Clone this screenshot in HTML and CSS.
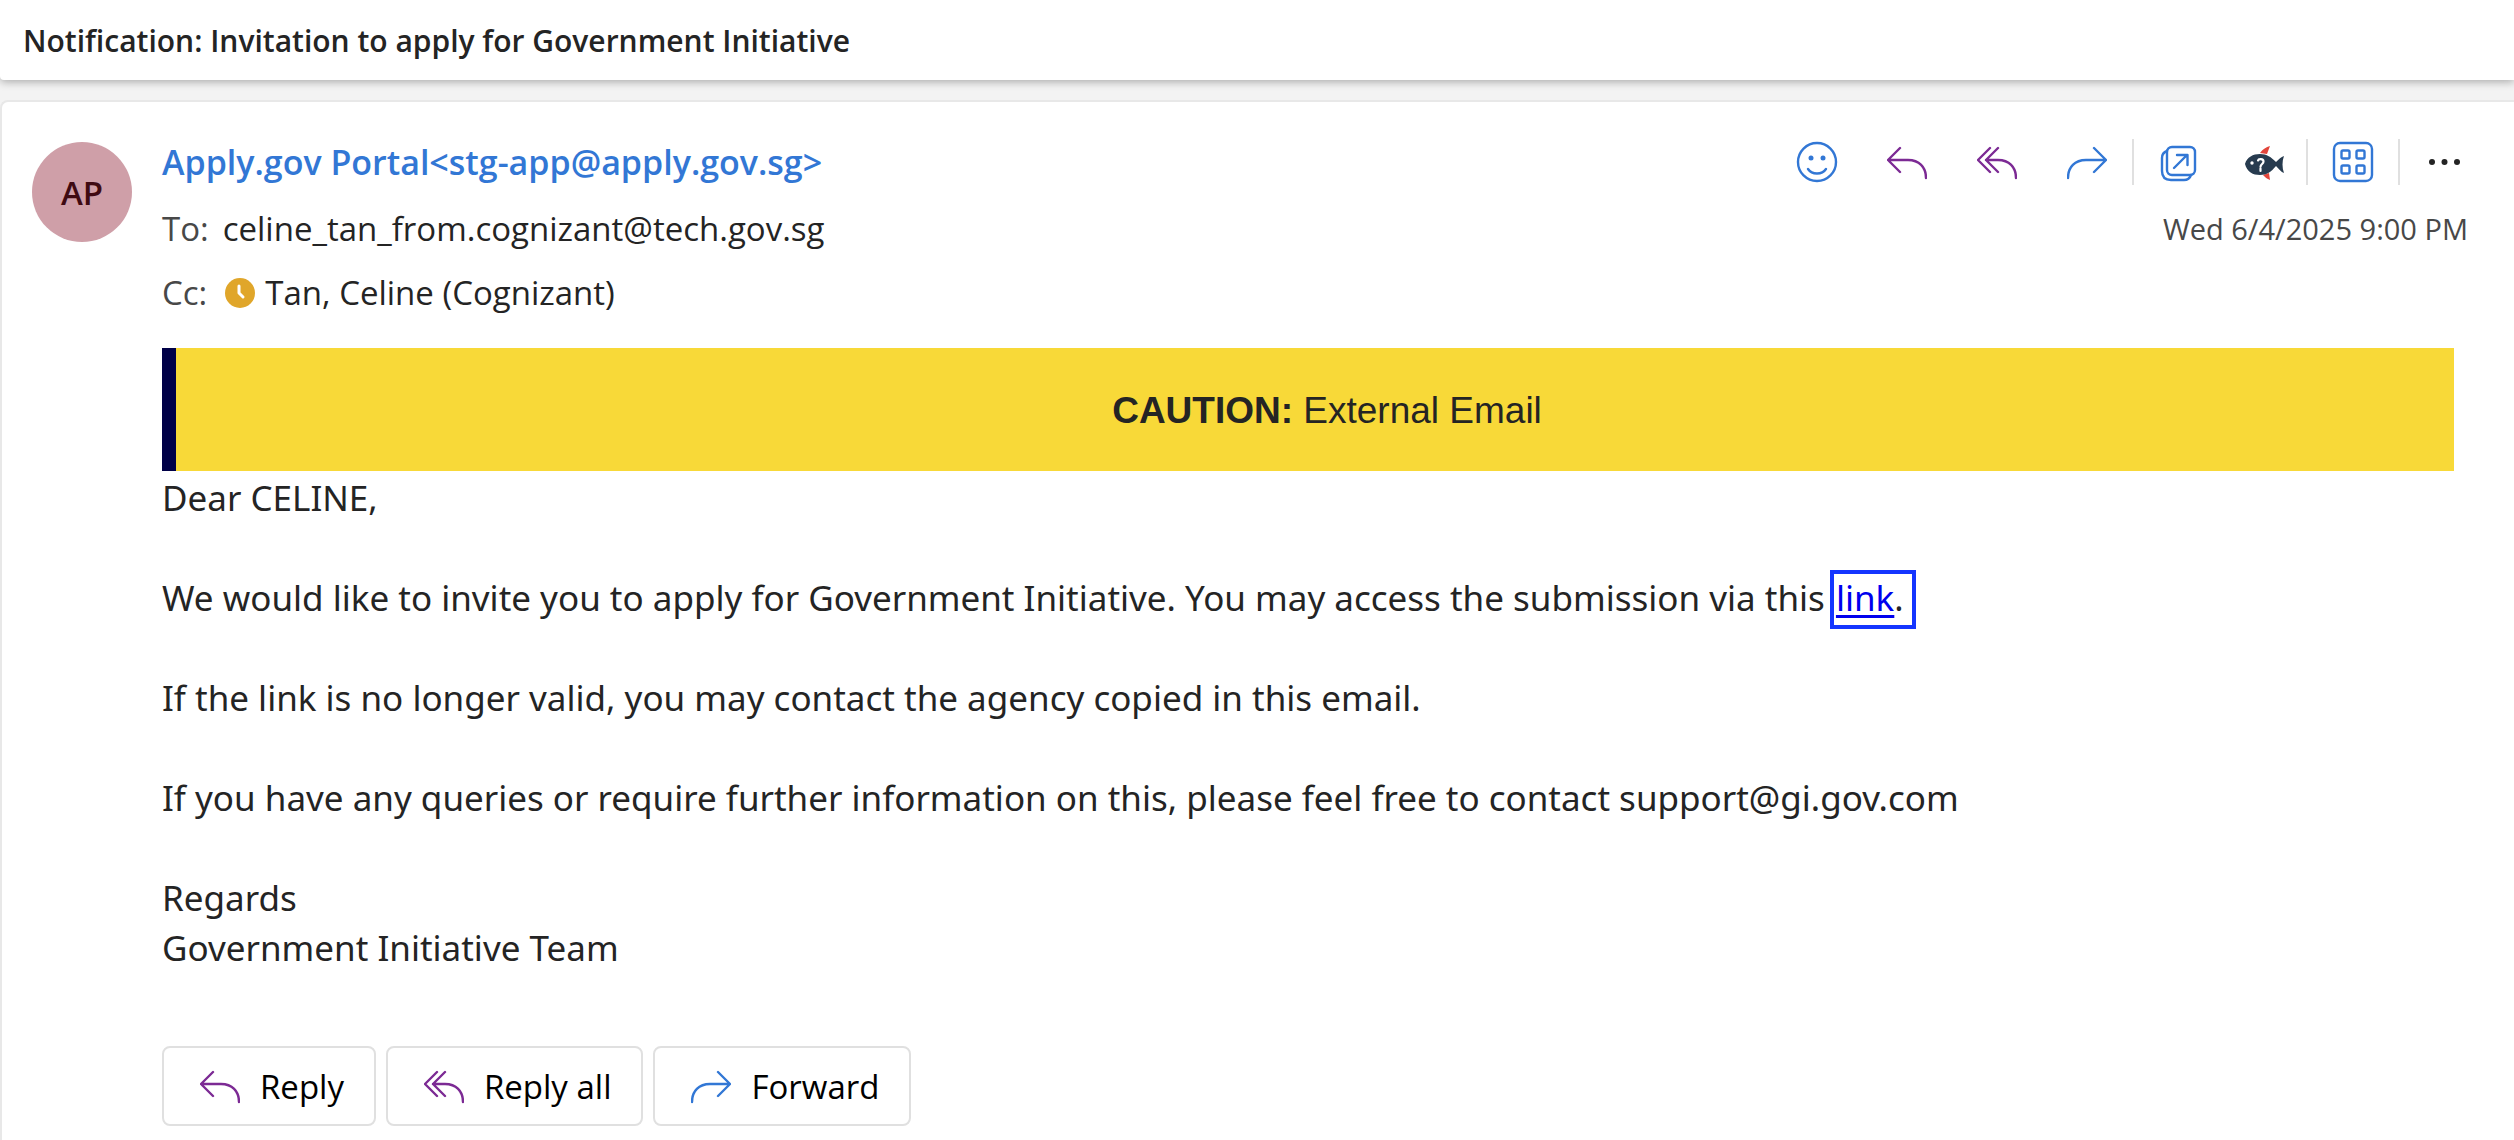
FILE: index.html
```html
<!DOCTYPE html>
<html lang="en">
<head>
<meta charset="utf-8">
<title>Notification: Invitation to apply for Government Initiative</title>
<link rel="stylesheet" href="styles.css">
</head>
<body>
<svg class="sprite" aria-hidden="true">
  <symbol id="reply" viewBox="0 0 40 40"><path d="M13 6 1 18 13 30M1 18H21C32 18 39 25 39 36"/></symbol>
  <symbol id="reply-all" viewBox="0 0 40 40"><path d="M13 6 1 18 13 30M21 6 9 18 21 30M9 18H21C32 18 39 25 39 36"/></symbol>
  <symbol id="forward" viewBox="0 0 40 40"><path d="M27 6 39 18 27 30M39 18H19C8 18 1 25 1 36"/></symbol>
</svg>

<header class="subject">
  <h1 class="subject-text">Notification: Invitation to apply for Government Initiative</h1>
</header>

<main class="message">
  <div class="avatar">AP</div>
  <div class="content">
    <div class="head">
      <div class="people">
        <div class="sender">Apply.gov Portal&lt;stg-app@apply.gov.sg&gt;</div>
        <div class="recipient"><span class="label">To:</span><span>celine_tan_from.cognizant@tech.gov.sg</span></div>
        <div class="recipient cc"><span class="label">Cc:</span>
          <svg class="presence" viewBox="0 0 30 30" aria-hidden="true"><circle cx="15" cy="15" r="15" fill="#e0a62a"/><path d="M14 8V15L18 19" fill="none" stroke="#fff" stroke-width="3" stroke-linecap="round" stroke-linejoin="round"/></svg>
          <span>Tan, Celine (Cognizant)</span></div>
      </div>
      <div class="meta">
        <div class="toolbar">
          <button class="tool blue" aria-label="React"><svg class="icon" viewBox="0 0 40 40"><circle cx="20" cy="20" r="19"/><path d="M11 27C15 33 25 33 29 27"/><circle class="solid" cx="14" cy="16" r="2.5"/><circle class="solid" cx="26" cy="16" r="2.5"/></svg></button>
          <button class="tool purple" aria-label="Reply"><svg class="icon"><use href="#reply"/></svg></button>
          <button class="tool purple" aria-label="Reply all"><svg class="icon"><use href="#reply-all"/></svg></button>
          <button class="tool blue" aria-label="Forward"><svg class="icon"><use href="#forward"/></svg></button>
          <span class="divider"></span>
          <button class="tool blue" aria-label="Open in new window"><svg class="icon" viewBox="0 0 40 40"><rect x="8" y="5" width="28" height="28" rx="5"/><path d="M8 9C5 10 3 12 3 16V29C3 35 6 38 12 38H25C29 38 31 36 32 33M15 26 28 13M18 13H28.500V23"/></svg></button>
          <button class="tool fish" aria-label="Report phishing"><svg class="icon" viewBox="0 0 40 40"><path fill="#e2453b" d="M15 11C18 7 21 5 25 4L22 12ZM18 33 24 31 25 38C22 37 20 35 18 33Z"/><path fill="#273b4f" d="M0 22C2 15 8 12 15 12C22 12 26 15 31 20C34 17 36 15 39 14C37 19 37 26 39 31C36 30 34 27 31 24C26 30 22 33 15 33C8 33 2 30 0 22Z"/><circle cx="7" cy="21" r="1.700" fill="#fff"/><path fill="none" stroke="#fff" stroke-width="2.200" d="M13 18.500C13.500 16.500 18.500 16.500 18.500 19.500C18.500 22 15.500 22 15.500 25M15.500 26.500V29"/></svg></button>
          <span class="divider"></span>
          <button class="tool blue" aria-label="Apps"><svg class="icon" viewBox="0 0 40 40"><rect x="1" y="1" width="38" height="38" rx="6"/><rect x="8.500" y="8.500" width="8" height="8" rx="1.500"/><rect x="23.500" y="8.500" width="8" height="8" rx="1.500"/><rect x="8.500" y="23.500" width="8" height="8" rx="1.500"/><rect x="23.500" y="23.500" width="8" height="8" rx="1.500"/></svg></button>
          <span class="divider"></span>
          <button class="tool" aria-label="More actions"><svg class="icon" viewBox="0 0 40 40"><g fill="#242424"><circle cx="7" cy="20" r="3"/><circle cx="19.500" cy="20" r="3"/><circle cx="32" cy="20" r="3"/></g></svg></button>
        </div>
        <time class="date" datetime="2025-06-04T21:00">Wed 6/4/2025 9:00 PM</time>
      </div>
    </div>

    <div class="caution"><span><strong>CAUTION:</strong> External Email</span></div>

    <div class="body">
      <p>Dear CELINE,</p>
      <p>We would like to invite you to apply for Government Initiative. You may access the submission via this <span class="highlight"><a href="#">link</a>.</span></p>
      <p>If the link is no longer valid, you may contact the agency copied in this email.</p>
      <p>If you have any queries or require further information on this, please feel free to contact support@gi.gov.com</p>
      <p>Regards<br>Government Initiative Team</p>
    </div>

    <div class="actions">
      <button class="action"><svg class="icon purple"><use href="#reply"/></svg>Reply</button>
      <button class="action"><svg class="icon purple"><use href="#reply-all"/></svg>Reply all</button>
      <button class="action"><svg class="icon blue"><use href="#forward"/></svg>Forward</button>
    </div>
  </div>
</main>
</body>
</html>
```

FILE: styles.css
```css
* { box-sizing: border-box; }

body {
  margin: 0;
  min-height: 100vh;
  display: flex;
  flex-direction: column;
  background: #f3f3f3;
  color: #242424;
  font-family: "Open Sans", "Noto Sans", sans-serif;
  font-size: 33px;
}

button {
  font: inherit;
  background: none;
  border: 0;
  padding: 0;
}

.sprite {
  position: absolute;
  width: 0;
  height: 0;
}

.subject {
  height: 80px;
  padding: 0 23px;
  display: flex;
  align-items: center;
  background: #fff;
  border-radius: 0 0 0 4px;
  box-shadow: 0 2px 8px rgba(0, 0, 0, 0.3);
}

.subject-text {
  margin: 0;
  font-size: 30px;
  font-weight: 600;
}

.message {
  flex: 1;
  margin-top: 20px;
  padding: 37px 24px 0 30px;
  display: flex;
  gap: 30px;
  background: #fff;
  border: 2px solid #e8e8e8;
  border-width: 2px 0 0 2px;
  border-radius: 8px 0 0 0;
}

.avatar {
  flex: none;
  width: 100px;
  height: 100px;
  margin-top: 3px;
  display: flex;
  align-items: center;
  justify-content: center;
  border-radius: 50%;
  background: #cf9fa8;
  color: #3f0a12;
  font-weight: 600;
}

.content { flex: 1; }

.head {
  display: flex;
  justify-content: space-between;
  height: 209px;
}

.sender {
  color: #3277d5;
  font-size: 34px;
  font-weight: 600;
  line-height: 46px;
}

.recipient {
  display: flex;
  align-items: center;
  gap: 14px;
  line-height: 64px;
  margin-top: 12px;
}

.recipient.cc { margin-top: 0; gap: 10px; }

.label { color: #484848; }

.cc .label { margin-right: 8px; }

.presence { width: 30px; height: 30px; }

.toolbar {
  display: flex;
  align-items: center;
}

.tool {
  width: 90px;
  height: 44px;
  display: flex;
  align-items: center;
  justify-content: center;
}

.tool.fish { width: 82px; }

.icon {
  width: 40px;
  height: 40px;
  fill: none;
  stroke-width: 2.4;
  stroke-linecap: round;
  stroke-linejoin: round;
  overflow: visible;
}

.blue { stroke: #3277d5; }
.purple { stroke: #7c2a94; }
.solid { fill: #3277d5; stroke: none; }

.divider {
  width: 2px;
  height: 46px;
  background: #e0e0e0;
}

.date {
  display: block;
  margin: 22px 22px 0 0;
  text-align: right;
  font-size: 29px;
  line-height: 44px;
  color: #484848;
}

.caution {
  height: 123px;
  margin-right: 36px;
  padding: 2px 0 0 24px;
  display: flex;
  align-items: center;
  justify-content: center;
  background: #f8d938;
  border-left: 14px solid #000047;
  font-family: "Liberation Sans", Arial, sans-serif;
  font-size: 37px;
}

.body {
  padding-top: 2px;
  font-family: "Noto Sans", "Open Sans", sans-serif;
  font-size: 35px;
  line-height: 50px;
}

.body p { margin: 0 0 50px; }

.body a {
  color: #0000ee;
  text-decoration-thickness: 3px;
  text-underline-offset: 4px;
}

.highlight {
  padding: 0 8px 4px 2px;
  outline: 4px solid #1435ff;
}

.actions {
  display: flex;
  gap: 10px;
  padding-top: 23px;
}

.action {
  height: 80px;
  padding: 0 30px 0 36px;
  display: flex;
  align-items: center;
  gap: 20px;
  border: 2px solid #e0e0e0;
  border-radius: 8px;
  color: #000;
}
```
